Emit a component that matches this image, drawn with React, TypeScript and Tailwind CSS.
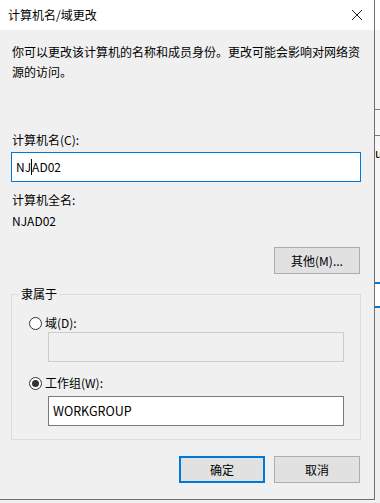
import React from 'react';

const font = { fontFamily: '"Noto Sans CJK SC", "Noto Sans", sans-serif' };

const Radio: React.FC<{ checked?: boolean; label: string }> = ({ checked, label }) => (
  <div className="flex items-center h-[16px]">
    <span className="w-[13px] h-[13px] rounded-full border border-[#333333] bg-white flex items-center justify-center">
      {checked && <span className="w-[7px] h-[7px] rounded-full bg-[#333333]" />}
    </span>
    <span className="ml-[3px] text-[12px] leading-[16px] text-black">{label}</span>
  </div>
);

const Button: React.FC<{ label: string; primary?: boolean }> = ({ label, primary }) => (
  <div
    className={
      'w-[86px] h-[27px] flex items-center justify-center text-[12px] text-black bg-[#e1e1e1] ' +
      (primary ? 'border-2 border-[#0078d7]' : 'border border-[#adadad]')
    }
  >
    {label}
  </div>
);

export default function App() {
  return (
    <div className="flex w-[380px] h-[503px] bg-[#f0f0f0] overflow-hidden" style={font}>
      <div className="w-[375px] h-[500px] shrink-0 bg-[#f0f0f0] border-r border-b border-[#6f6f6f] flex flex-col">
        {/* title bar */}
        <div className="h-[30px] bg-white flex items-center justify-between pl-[8px] pr-[10px]">
          <span className="text-[12px] text-black">计算机名/域更改</span>
          <svg width="12" height="12" viewBox="0 0 12 12" className="mr-[1px]">
            <path d="M1 1 L11 11 M11 1 L1 11" stroke="#222" strokeWidth="1" />
          </svg>
        </div>

        <div className="flex flex-col pl-[12px] pr-[14px] pt-[12px]">
          <p className="w-[350px] text-[12px] leading-[20px] text-black">
            你可以更改该计算机的名称和成员身份。更改可能会影响对网络资源的访问。
          </p>

          <div className="mt-[50px] text-[12px] leading-[16px] text-black">计算机名(C):</div>
          <div className="mt-[4px] -ml-[1px] w-[350px] h-[30px] bg-white border border-[#0078d7] flex items-center pl-[4px] text-[12px] text-black">
            NJ<span className="inline-block w-px h-[16px] bg-black" />AD02
          </div>

          <div className="mt-[10px] text-[12px] leading-[16px] text-black">计算机全名:</div>
          <div className="mt-[5px] text-[12px] leading-[16px] text-black">NJAD02</div>

          <div className="mt-[18px] flex justify-end">
            <Button label="其他(M)..." />
          </div>

          {/* group box */}
          <div className="relative mt-[20px] -ml-[1px] w-[350px] h-[146px] border border-[#dcdcdc] pl-[17px] pt-[20px]">
            <span className="absolute -top-[9px] left-[7px] px-[2px] bg-[#f0f0f0] text-[12px] leading-[16px] text-black">
              隶属于
            </span>
            <Radio label="域(D):" />
            <div className="mt-[1px] ml-[19px] w-[296px] h-[30px] border border-[#cccccc] bg-[#f0f0f0]" />
            <div className="mt-[13px]">
              <Radio checked label="工作组(W):" />
            </div>
            <div className="mt-[5px] ml-[19px] w-[296px] h-[30px] border border-[#7a7a7a] bg-white flex items-center pl-[4px] text-[12.5px] text-black">
              WORKGROUP
            </div>
          </div>

          <div className="mt-[16px] flex justify-end gap-[9px]">
            <Button label="确定" primary />
            <Button label="取消" />
          </div>
        </div>
      </div>

      {/* window behind */}
      <div className="flex-1 flex flex-col">
        <div className="h-[30px] bg-white" />
        <div className="h-[80px] bg-[#f5f5f5] border-b border-[#7a7a7a]" />
        <div className="h-[26px] bg-[#f7f7f7] border-b border-[#7a7a7a]" />
        <div className="h-[146px] pt-[9px] bg-[#f7f7f7] text-[12px] leading-[16px] text-black overflow-hidden">u</div>
        <div className="h-[26px] bg-white border-y-2 border-[#0078d7]" />
        <div className="flex-1 bg-[#f0f0f0]" />
      </div>
    </div>
  );
}
